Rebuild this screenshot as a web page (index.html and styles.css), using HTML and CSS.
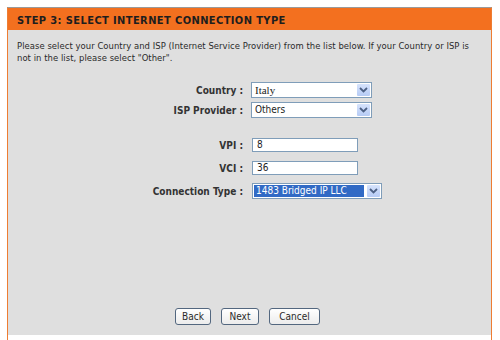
FILE: index.html
```html
<!DOCTYPE html>
<html>
<head>
<meta charset="utf-8">
<link rel="stylesheet" href="styles.css">
</head>
<body>
<div class="panel">
  <div class="header"><span class="title">STEP 3: SELECT INTERNET CONNECTION TYPE</span></div>
  <div class="content">
    <p class="intro">Please select your Country and ISP (Internet Service Provider) from the list below. If your Country or ISP is not in the list, please select "Other".</p>
    <div class="form">
      <div class="row r-country">
        <span class="label">Country :</span>
        <div class="select w-country"><span class="value serif">Italy</span><span class="arrow"><svg width="9" height="6" viewBox="0 0 9 6"><path d="M1 1 L4.5 4.5 L8 1" fill="none" stroke="#4d6185" stroke-width="1.8"/></svg></span></div>
      </div>
      <div class="row r-isp">
        <span class="label">ISP Provider :</span>
        <div class="select w-country"><span class="value">Others</span><span class="arrow"><svg width="9" height="6" viewBox="0 0 9 6"><path d="M1 1 L4.5 4.5 L8 1" fill="none" stroke="#4d6185" stroke-width="1.8"/></svg></span></div>
      </div>
      <div class="row r-vpi">
        <span class="label">VPI :</span>
        <div class="input">8</div>
      </div>
      <div class="row r-vci">
        <span class="label">VCI :</span>
        <div class="input">36</div>
      </div>
      <div class="row r-ct">
        <span class="label">Connection Type :</span>
        <div class="select w-ct"><span class="value hl">1483 Bridged IP LLC</span><span class="arrow"><svg width="9" height="6" viewBox="0 0 9 6"><path d="M1 1 L4.5 4.5 L8 1" fill="none" stroke="#4d6185" stroke-width="1.8"/></svg></span></div>
      </div>
    </div>
    <div class="buttons">
      <span class="btn b-back">Back</span>
      <span class="btn b-next">Next</span>
      <span class="btn b-cancel">Cancel</span>
    </div>
  </div>
  <div class="bottom"></div>
</div>
</body>
</html>
```
FILE: styles.css
```css
html, body {
  margin: 0;
  padding: 0;
  background: #ffffff;
}
body {
  font-family: "DejaVu Sans Condensed", "DejaVu Sans", sans-serif;
  color: #2a2a2a;
}
.panel {
  margin: 7px 0 0 7px;
  width: 483px;
  height: 333px;
  border-top: 1px solid #9a9a9a;
  border-left: 1px solid #ee7d33;
  border-right: 1px solid #ee7d33;
  display: flex;
  flex-direction: column;
}
.header {
  background: #f3701f;
  height: 22px;
  line-height: 22px;
  padding-left: 9px;
}
.title {
  font-family: "DejaVu Sans Condensed", "DejaVu Sans", sans-serif;
  font-weight: bold;
  font-size: 11px;
  letter-spacing: 0.4px;
  color: #1e1e1e;
}
.content {
  flex: 1;
  background: #dfdfdf;
  padding: 10px 9px 0 9px;
  display: flex;
  flex-direction: column;
}
.bottom {
  height: 6px;
  background: #fff;
}
.intro {
  margin: 0;
  max-width: 456px;
  font-size: 9.4px;
  letter-spacing: 0.05px;
  line-height: 12px;
  color: #2a2a2a;
}
.form {
  margin-top: 18px;
  display: flex;
  flex-direction: column;
}
.row {
  display: flex;
  align-items: center;
}
.label {
  width: 226px;
  text-align: right;
  font-weight: bold;
  font-size: 10px;
  color: #333;
  margin-right: 8px;
}
.r-country { height: 16px; }
.r-isp { height: 16px; margin-top: 4px; }
.r-vpi { height: 14px; margin-top: 20px; }
.r-vci { height: 14px; margin-top: 9px; }
.r-ct { height: 16px; margin-top: 8px; }
.select {
  height: 16px;
  box-sizing: border-box;
  border: 1px solid #7f9db9;
  background: #fff;
  display: flex;
  align-items: stretch;
  font-size: 10px;
}
.w-country { width: 121px; }
.w-ct { width: 130px; margin-left: 1px; }
.value {
  flex: 1;
  padding-left: 3px;
  line-height: 14px;
  color: #222;
  white-space: nowrap;
  overflow: hidden;
}
.serif {
  font-family: "Liberation Serif", serif;
  font-size: 11px;
}
.hl {
  background: #316ac5;
  color: #fff;
  margin: 1px 2px 1px 1px;
  line-height: 12px;
  padding-left: 2px;
}
.arrow {
  width: 13px;
  margin: 1px;
  background: linear-gradient(#d6e3fc, #b6cbf5);
  border-radius: 1px;
  display: flex;
  align-items: center;
  justify-content: center;
}
.input {
  width: 106px;
  height: 14px;
  box-sizing: border-box;
  margin-left: 1px;
  border: 1px solid #7f9db9;
  background: #fff;
  font-size: 10px;
  line-height: 12px;
  padding-left: 4px;
  color: #222;
}
.buttons {
  margin-top: 109px;
  display: flex;
  justify-content: center;
  gap: 10px;
  padding-right: 4px;
}
.btn {
  height: 17px;
  box-sizing: border-box;
  border: 1px solid #53677f;
  border-radius: 3px;
  background: linear-gradient(#ffffff, #ececec);
  font-size: 10px;
  line-height: 15px;
  text-align: center;
  color: #2a2a2a;
}
.b-back { width: 36px; }
.b-next { width: 38px; }
.b-cancel { width: 51px; }
```
